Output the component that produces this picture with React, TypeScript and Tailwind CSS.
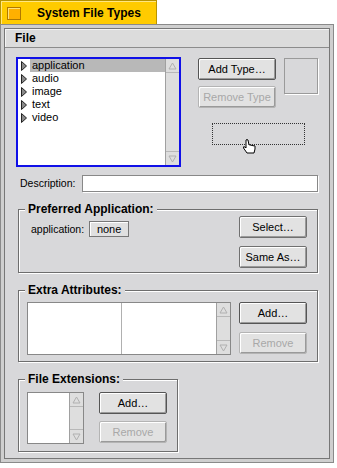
import type { ReactNode } from 'react';

// ─── Small pieces ─────────────────────────────────────────────────────────────

const FONT = "font-['Liberation_Sans',Arial,sans-serif]";

function Btn({ children, disabled, w = 'w-[68px]', strong }: { children: ReactNode; disabled?: boolean; w?: string; strong?: boolean }) {
  return (
    <div
      className={`${w} h-[22px] flex items-center justify-center text-[11px] border rounded-[2px] bg-[#e2e2e2] shadow-[inset_1px_1px_0_#fff,inset_-1px_-1px_0_#9a9a9a] ${
        disabled ? 'border-[#b4b4b4] text-[#a8a8a8]' : strong ? 'border-[#555] text-black' : 'border-[#707070] text-black'
      }`}
    >
      {children}
    </div>
  );
}

function ScrollBar() {
  return (
    <div className="w-[14px] h-full flex flex-col border-l border-[#a0a0a0] bg-[#dedede]">
      <div className="h-[14px] flex items-center justify-center border-b border-[#b8b8b8]">
        <svg width="9" height="8" viewBox="0 0 9 8"><path d="M4.5 1 L8 7 L1 7 Z" fill="none" stroke="#b0b0b0" /></svg>
      </div>
      <div className="flex-1" />
      <div className="h-[14px] flex items-center justify-center border-t border-[#b8b8b8]">
        <svg width="9" height="8" viewBox="0 0 9 8"><path d="M4.5 7 L8 1 L1 1 Z" fill="none" stroke="#b0b0b0" /></svg>
      </div>
    </div>
  );
}

function Group({ title, className, children }: { title: string; className: string; children: ReactNode }) {
  return (
    <div className={`relative border border-[#6e6e6e] shadow-[1px_1px_0_#fff,inset_1px_1px_0_#fff] ${className}`}>
      <span className="absolute -top-[9px] left-[6px] px-[3px] bg-[#d8d8da] text-[12px] font-bold leading-[16px] text-black">
        {title}
      </span>
      {children}
    </div>
  );
}

function Arrow() {
  return (
    <svg width="6" height="10" viewBox="0 0 6 10" className="flex-shrink-0">
      <path d="M0.5 0.5 L5.5 5 L0.5 9.5 Z" fill="#8a8a8a" stroke="#222" />
    </svg>
  );
}

const TYPES = ['application', 'audio', 'image', 'text', 'video'];

// ─── App ──────────────────────────────────────────────────────────────────────

export default function App() {
  return (
    <div className={`${FONT} w-[337px] h-[468px] bg-white overflow-hidden relative`}>
      {/* ── Title tab ── */}
      <div className="w-[157px] h-[25px] bg-[#ffcb00] border-l border-t border-r border-[#b89400] shadow-[inset_1px_1px_0_#ffe680] flex items-center">
        <div className="ml-[6px] w-[14px] h-[13px] border border-[#b07800] bg-[#ffb000] shadow-[inset_1px_1px_0_#ffe27a]" />
        <span className="ml-[16px] text-[12px] font-bold text-black">System File Types</span>
      </div>

      {/* ── Window body ── */}
      <div className="w-[334px] h-[439px] border border-[#8a8a8a] bg-[#cfcfcf] p-[3px] -mt-[1px]">
        <div className="w-full h-full border border-[#777] bg-[#d8d8da] flex flex-col">
          {/* Menu bar */}
          <div className="h-[19px] flex items-center pl-[10px] bg-[#dcdcdc] border-b border-[#8c8c8c] shadow-[inset_1px_1px_0_#f4f4f4]">
            <span className="text-[12px] font-bold text-black">File</span>
          </div>

          {/* Content */}
          <div className="flex-1 pl-[11px] pt-[9px] text-black">
            {/* Top row */}
            <div className="flex">
              <div className="w-[165px] h-[110px] border-2 border-[#1010e8] bg-white flex">
                <div className="flex-1">
                  {TYPES.map((t, i) => (
                    <div key={t} className="h-[13px] flex items-center">
                      <div className="w-[12px] pl-[3px] flex"><Arrow /></div>
                      <span className={`text-[11px] leading-[13px] pl-[2px] pr-[4px] ${i === 0 ? 'bg-[#b8b8b8] flex-1' : ''}`}>{t}</span>
                    </div>
                  ))}
                </div>
                <ScrollBar />
              </div>

              <div className="ml-[17px] flex flex-col pt-[1px]">
                <div className="flex">
                  <div className="flex flex-col gap-[6px]">
                    <Btn w="w-[78px]" strong>Add Type…</Btn>
                    <Btn w="w-[78px]" disabled>Remove Type</Btn>
                  </div>
                  <div className="ml-[8px] w-[34px] h-[36px] border border-[#9a9a9a] shadow-[1px_1px_0_#fff]" />
                </div>
                <div className="relative ml-[14px] mt-[15px] w-[93px] h-[22px] border border-dotted border-[#333]">
                  <svg width="16" height="16" viewBox="0 0 16 16" className="absolute left-[29px] top-[15px]">
                    <path d="M4 1 L4 9 L3 8 Q1 7 1.5 9 L5 14 L12 14 L13 10 L13 7 Q12 6 11 7 Q10 5.5 9 6.5 Q8 5 7 6 L6 1 Q5 0 4 1 Z" fill="#fff" stroke="#000" strokeWidth="1" />
                  </svg>
                </div>
              </div>
            </div>

            {/* Description */}
            <div className="flex items-center mt-[8px] pl-[4px]">
              <span className="text-[10.5px] w-[62px]">Description:</span>
              <div className="w-[236px] h-[17px] bg-white border border-[#888] shadow-[1px_1px_0_#fff]" />
            </div>

            {/* Preferred application */}
            <Group title="Preferred Application:" className="ml-[2px] mt-[17px] w-[300px] h-[64px]">
              <div className="flex h-full">
                <div className="flex items-start pt-[11px] pl-[12px] flex-1">
                  <span className="text-[10.5px] leading-[16px]">application:</span>
                  <div className="ml-[5px] w-[40px] h-[16px] flex items-center justify-center text-[11px] bg-[#e0e0e0] border border-[#777] shadow-[inset_1px_1px_0_#fff]">none</div>
                </div>
                <div className="flex flex-col gap-[8px] pt-[6px] pr-[10px]">
                  <Btn>Select…</Btn>
                  <Btn>Same As…</Btn>
                </div>
              </div>
            </Group>

            {/* Extra attributes */}
            <Group title="Extra Attributes:" className="ml-[2px] mt-[17px] w-[300px] h-[72px]">
              <div className="flex h-full pt-[11px] pl-[8px]">
                <div className="w-[204px] h-[53px] bg-white border border-[#888] flex">
                  <div className="w-[94px] border-r border-[#b0b0b0]" />
                  <div className="flex-1" />
                  <ScrollBar />
                </div>
                <div className="ml-[8px] flex flex-col gap-[8px]">
                  <Btn strong>Add…</Btn>
                  <Btn disabled>Remove</Btn>
                </div>
              </div>
            </Group>

            {/* File extensions */}
            <Group title="File Extensions:" className="ml-[2px] mt-[17px] w-[160px] h-[73px]">
              <div className="flex h-full pt-[12px] pl-[8px]">
                <div className="w-[57px] h-[52px] bg-white border border-[#888] flex">
                  <div className="flex-1" />
                  <ScrollBar />
                </div>
                <div className="ml-[15px] flex flex-col gap-[7px]">
                  <Btn strong>Add…</Btn>
                  <Btn disabled>Remove</Btn>
                </div>
              </div>
            </Group>
          </div>
        </div>
      </div>
    </div>
  );
}
